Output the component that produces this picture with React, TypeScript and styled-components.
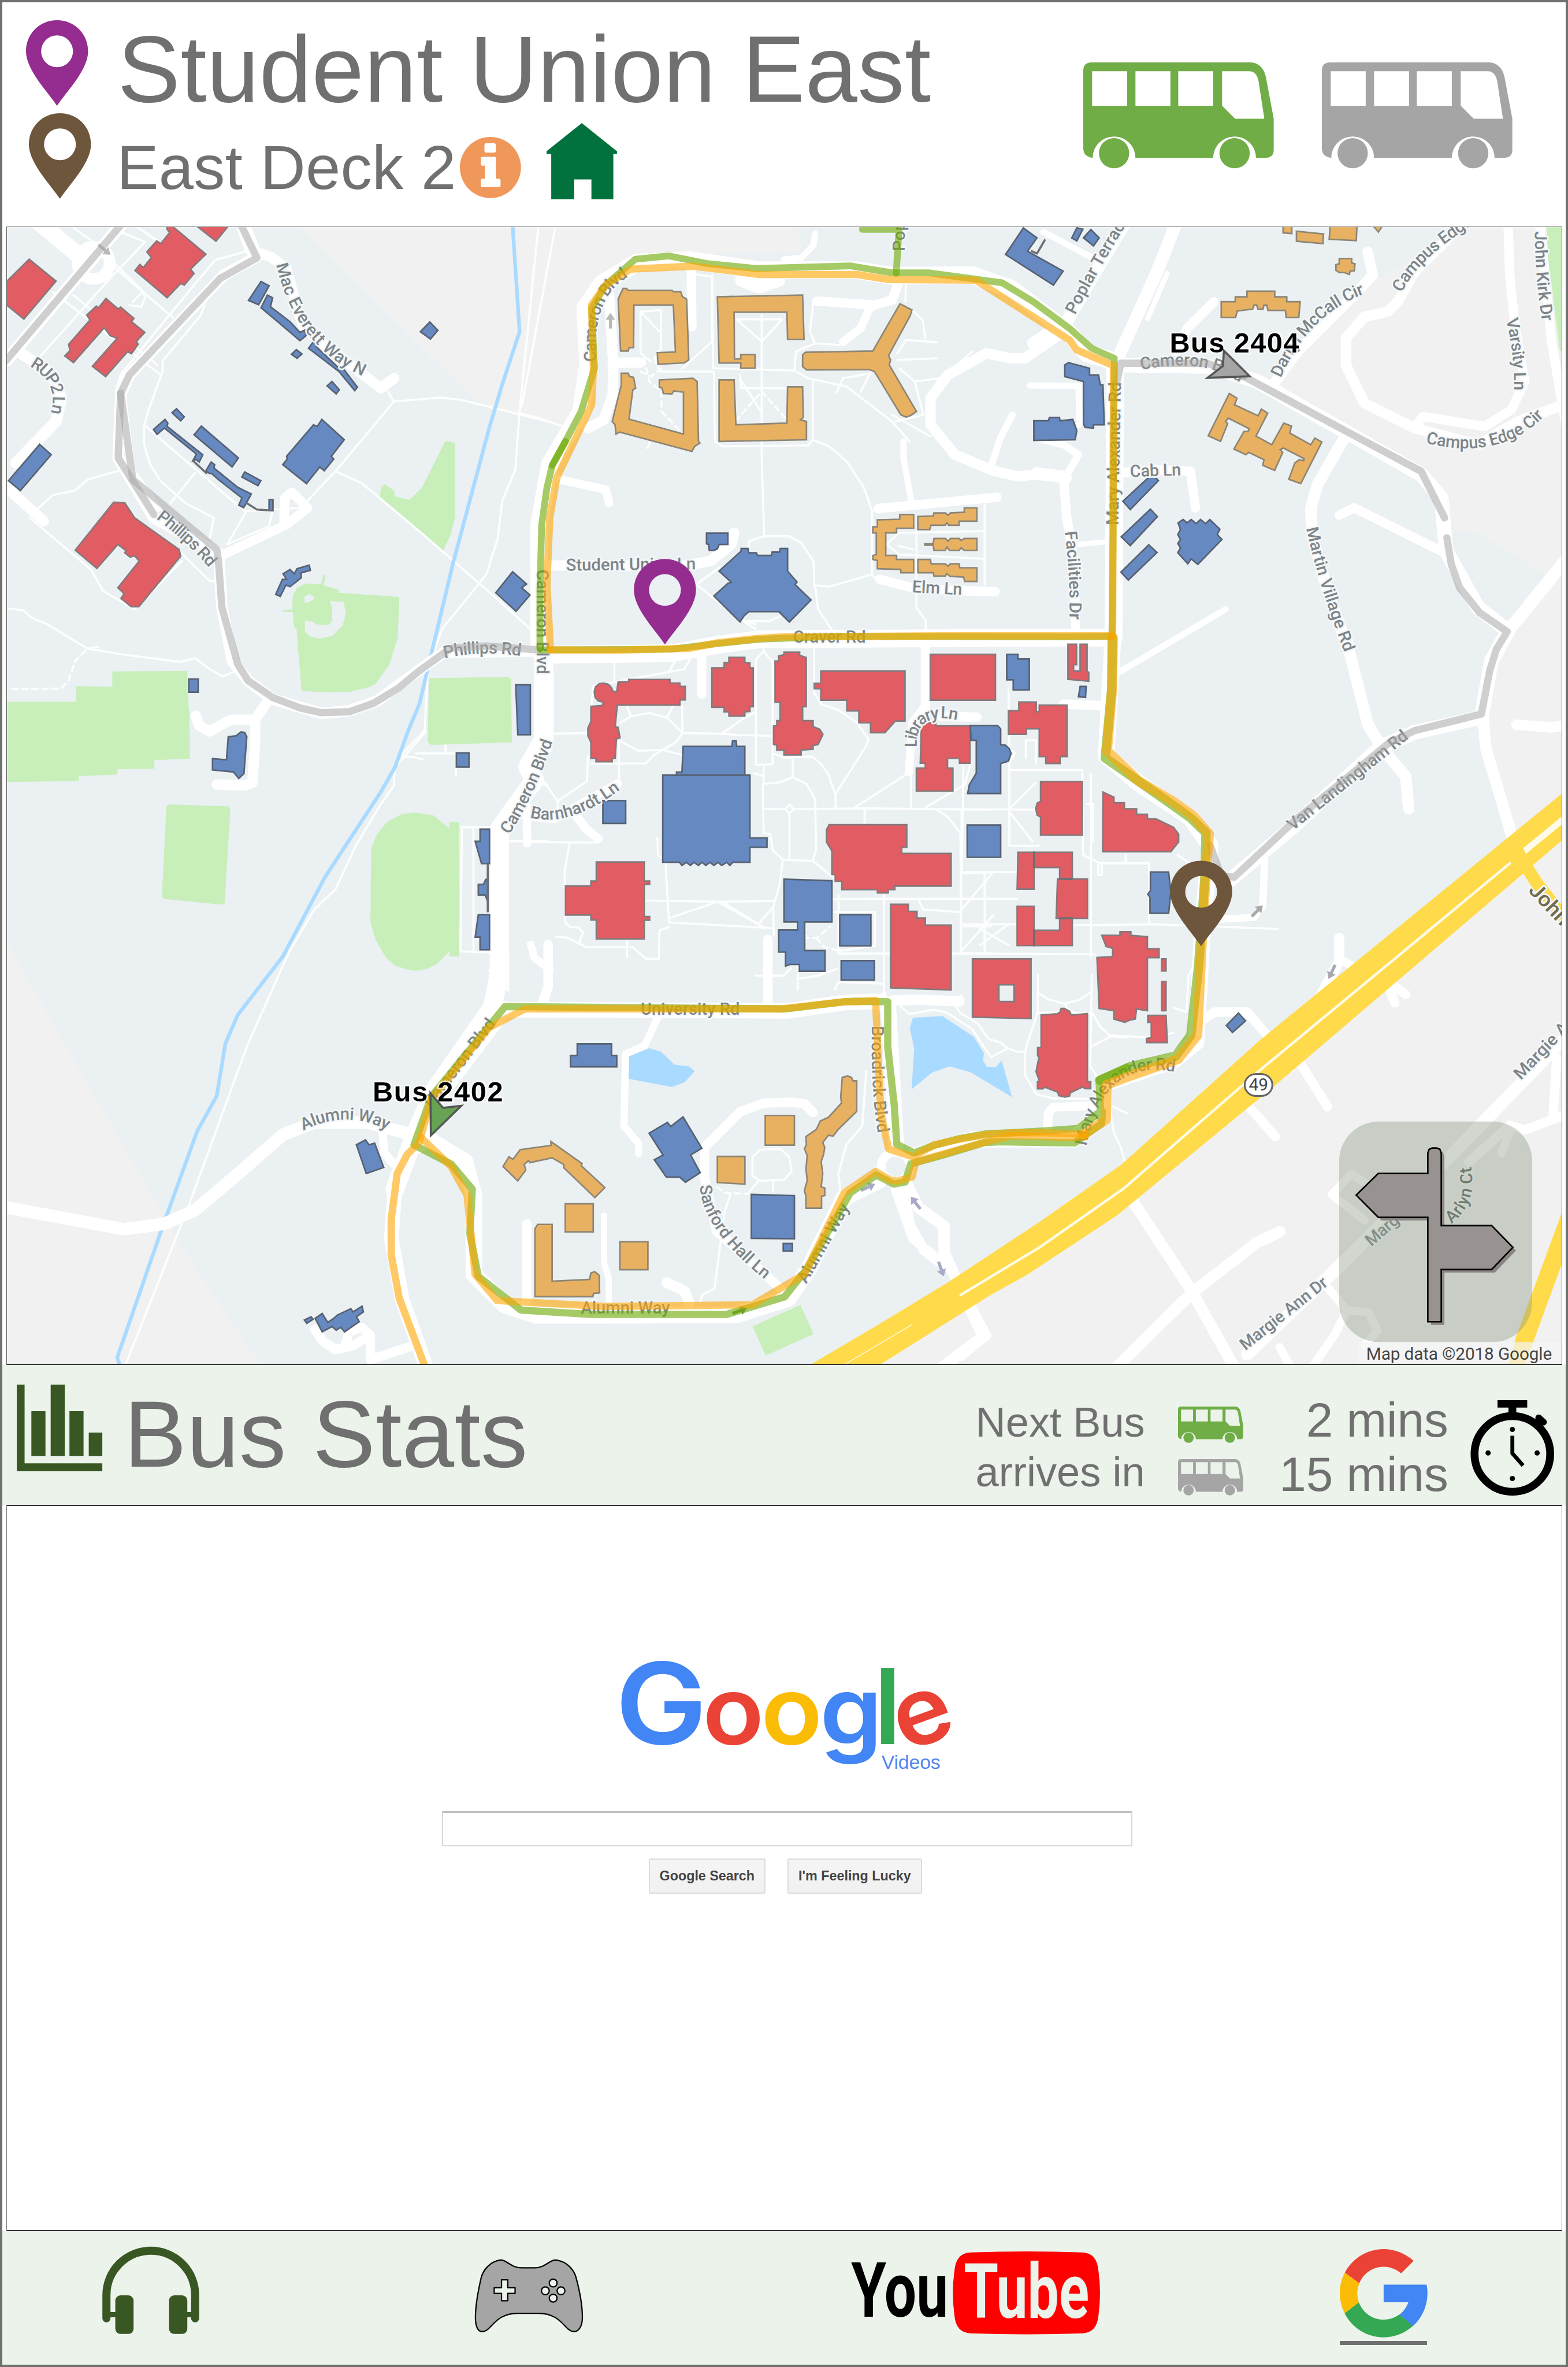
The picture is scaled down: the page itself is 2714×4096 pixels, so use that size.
import React from "react";
import styled, { createGlobalStyle } from "styled-components";

const K = 2714 / 3005;
const u = (n: number) => `${+(n * K).toFixed(2)}px`;

/* ---------- map survey: points are read inside named tiles ---------- */

const TILES: Record<string, [number, number, number, number]> = {
  A: [0, 430, 1050, 1000],
  B: [1000, 430, 1050, 1000],
  C: [2000, 430, 1005, 1000],
  D: [0, 1400, 1050, 1220],
  E: [1000, 1230, 900, 780],
  F: [1700, 1230, 1305, 1390],
  G: [700, 1900, 1200, 720],
  H: [1640, 1900, 522.7, 522.7],
};
const SIDE = 1568;

type Pt = [number, number];

const place = (tile: string, x: number, y: number): Pt => {
  const [ox, oy, w, h] = TILES[tile];
  return [+(ox + (x * w) / SIDE).toFixed(1), +(oy + (y * h) / SIDE).toFixed(1)];
};

const pts = (src: string): Pt[] => {
  let tile = "A";
  const out: Pt[] = [];
  src.trim().split(/\s+/).forEach((tok) => {
    if (/^[A-H]$/.test(tok)) tile = tok;
    else {
      const [x, y] = tok.split(",").map(Number);
      out.push(place(tile, x, y));
    }
  });
  return out;
};
const join = (src: string) => pts(src).map((p) => p.join(",")).join(" ");
const lines = (src: string) => src.trim().split("\n").map((l) => l.trim()).filter(Boolean);

const OUTSIDE = lines(`
A 850,0 1370,535 1568,595 B 130,610 200,420 200,250 300,110 400,90 800,80 790,0
D 20,525 510,1258 750,1568 20,1568
C 1568,0 1250,0 1060,130 960,180 850,290 720,430 690,480 1130,740 1210,870 1230,920 1300,925 1500,1050 1395,1225 1350,1300 1305,1480 F 1375,260 1440,430 1568,350
F 1568,380 530,1200 0,1520 G 1200,1568 F 1568,1568
`);

const PARKS = lines(`
A 1275,648 1302,655 1302,880 1290,930 1268,980 1087,818 1090,790 1100,778 1128,798 1130,815 1172,826 1207,790
A 848,1210 842,1210 838,1163 810,1162 810,1157 836,1156 838,1115 850,1090 875,1077 918,1080 926,1050 932,1054 926,1083 970,1096 968,1105 1143,1118 1138,1240 1115,1320 1075,1380 1050,1391 1000,1403 940,1405 863,1400
A 20,1433 218,1433 218,1386 321,1388 321,1342 536,1340 536,1400 542,1470 D 543,68 441,72 441,93 336,94 336,107 225,111 225,123 20,126
A 1228,1362 1455,1358 1463,1365 1465,1555 1235,1563 1224,1555
D 482,181 655,186 659,192 643,424 635,428 468,414 463,408 476,186
D 1062,290 1078,255 1110,222 1150,205 1185,201 1240,208 1286,240 1286,224 1314,224 1314,556 1286,556 1286,543 1250,575 1220,587 1190,591 1165,588 1130,578 1105,560 1075,515 1060,470
G 970,1398 1090,1308 1123,1430 1003,1520
C 1505,0 1568,0 1568,378 1545,378 1530,260 1510,100
`);

const INFIELD = lines(`
A 872,1190 895,1192 903,1200 940,1203 950,1190 950,1150 944,1130 983,1133 990,1165 980,1205 950,1235 915,1243 890,1238 873,1224
A 872,1135 871,1118 885,1109 900,1118 899,1124 880,1135
`);

const LAKES = lines(`
H 330,150 500,140 680,260 738,355 733,395 755,432 805,434 840,396 900,607 660,463 540,430 440,465 322,562 337,330 312,210
G 660,270 712,236 740,250 775,305 810,312 825,332 800,378 768,398 657,363
`);

const RIVER =
  "A 1467,0 1487,320 1437,480 1400,610 1297,1015 1200,1440 D 1168,0 1130,90 1090,150 1010,255 930,360 810,555 680,700 645,770 620,900 565,985 470,1210 335,1545 345,1568";

const ROADS = lines(`
24|A 345,0 20,405
32|A 110,-10 235,100
22|A 700,0 735,95 640,150 370,450 345,510 338,700 440,880 625,985 635,1150 665,1310 710,1370 780,1425 920,1468 1000,1460 1080,1430 1190,1345 1270,1285 1540,1280
16|A 355,450 350,520 375,740 450,850
20|A 690,0 715,75 775,95 820,130 850,250 870,310 1090,490 1128,460
22|A 60,385 150,450 175,520 160,590 45,715
20|A 20,790 125,890
18|A 640,990 820,900 880,850 835,803 815,820 812,900
20|A 560,1475 570,1505 600,1522 660,1487 730,1487 770,1425
20|A 730,1487 D 730,30 722,128 700,134 620,132
34|B 330,112 230,175 182,250 190,420 170,560 80,720 50,900 50,1280
36|B 62,1290 62,1568
36|E 75,100 75,370 20,480 D 1530,120 1430,240 1428,600 1410,680 1240,890 1190,990 1130,1130
28|D 1190,1000 1130,1130 1120,1250 1150,1400 1220,1568
20|B 250,210 262,420 260,510 235,585 190,610
20|B 260,413 340,413
18|B 485,130 487,305
16|B 110,765 240,795 250,835
20|B 60,1023 470,1023 540,1010 600,960 608,925
34|B 330,112 480,105 680,135 960,135 1060,152 1290,150 1400,190 1568,325 C 130,385 215,410 210,1235
12|B 840,25 835,60 800,98 750,103
26|B 630,165 680,185 735,165
18|B 845,228 1010,240 1060,225 1080,170
16|B 1000,240 970,310 920,350
20|B 1545,325 1440,400 1400,400 1330,385 1220,450 1170,520 1170,600 1240,690 1350,738 1420,755 1470,750 1560,760
13|B 1345,720 1370,640 1405,570
12|B 1093,650 1093,700 1115,830
18|B 1020,852 1360,818
18|B 1025,1065 1110,1088 1230,1098 1355,1102
12|B 1455,482 C 105,483 108,600
14|C -20,640 60,660 105,690 65,760
22|C -20,745 60,755
18|C 60,755 70,880 90,1000 97,1220
10|C 100,960 190,952
24|C 218,410 340,140 395,0
10|C 312,280 370,145
18|C 400,380 430,310 510,230
24|C -30,355 70,290 150,150 240,0
12|C 0,20 170,110
28|C 225,420 500,425 640,470 1130,750 1190,820 1205,980 1300,1150 1390,1220 1340,1310 1310,1480 1110,1525 1010,1568 F 940,395 790,515
20|C 680,490 760,380 900,240 985,150 970,80
20|C 1250,0 1110,140 1060,230 1030,260 960,275 905,340 905,420 960,535 1110,610 1300,660 1420,590 1568,535
18|C 1110,610 1135,575 1320,605 1400,555 1440,470 1410,300 1395,150 1390,0
18|C 1485,0 1520,350 1568,630
22|C 900,640 820,780 800,850 803,930 850,1100 920,1300 970,1500 1010,1568 F 1150,240 1195,290 1202,360
20|F 1060,-10 1080,80 1110,180 1150,240
18|C 885,872 930,850 1200,985
18|C 225,745 330,735 440,740 455,850
12|C 545,1155 225,1345
24|C 1568,1000 1390,1220
22|C 1315,1480 F 1380,230 1440,420
20|C 1415,1502 1520,1510 1568,1503
18|C 60,1440 190,1445
17|B 1155,1255 1155,1450
18|B 515,1290 515,1410
34|B 62,1292 430,1287 560,1262 680,1245 1568,1240 C 210,1240
16|E 1350,0 1350,240 1305,310 1293,500
18|E 1400,285 1520,288
16|E 15,560 18,775
17|E 25,670 110,680 320,545
17|E 180,665 215,720 255,757
15|E 30,1165 42,1215 95,1262
18|E 88,1165 88,1330 65,1400
18|E 822,1145 822,1400
20|E 1240,1380 1330,1378 1462,1384
30|G 345,75 1060,80 1200,45 1290,40 1310,60 1330,640
34|G 345,75 220,350 160,480 130,640
32|G 140,600 250,710 272,850 272,1180 350,1310 430,1352 600,1352 930,1350 1060,1280 1110,1160 1200,860 1285,790
28|G 325,0 320,90
16|G 455,0 445,60
14|G 735,100 700,225 652,260 648,560 685,635 685,675
18|G 1122,505 1100,468 1070,462 1000,465 940,500 850,650 850,780 880,1000 1040,1240
18|G 405,970 405,1290
12|G 598,935 598,1130 610,1200 610,1290
20|G 755,1215 800,1250 812,1300
20|G 1345,800 1365,980 1400,1080 1440,1130
22|G 1350,780 1385,900 1450,980 1450,1090 1480,1200 1548,1440 1420,1600
18|F 20,1185 60,1290 150,1360 230,1500 170,1545
32|F 60,1112 200,1075 430,1075 500,1025 500,955 660,905 712,865 728,600 745,440 700,380 580,305 505,245 520,0
24|D 20,1175 355,1228 470,1215 560,1180 690,1085 810,995 900,965 1050,965 1180,995
16|D 1095,990 1100,1040 1140,1080
18|D 900,1475 925,1505 960,1525 1010,1515 1060,1490 1035,1470 1000,1480 985,1520
18|D 1060,1490 1060,1550 1200,1510
22|F 560,1200 700,1400 800,1568
22|F 530,1568 700,1410 850,1300 905,1275
24|F 1568,850 1300,1110 1020,1370 830,1540
18|F 945,900 1015,1005
18|F 730,815 755,800 830,800 880,855 930,920
18|F 830,1000 895,1070
20|F 1042,640 1042,690 990,780
16|F 1042,685 1090,710 1130,740
18|F 1150,730 1170,780
18|F 1150,730 1195,762
14|F 745,600 845,595 866,570 870,470
18|F 1568,1020 1470,1055 1435,1045 1340,1125
18|F 1543,900 1535,1020
16|F 1435,1060 1415,1105
16|F 1100,1250 1025,1195 1070,1150 1150,1200
16|F 905,1525 930,1568
16|F 980,1568 1030,1500 1060,1445 1110,1450 1130,1490 1100,1520
16|F 1000,1380 1060,1445
17|H 1105,780 1108,700 1135,665 1380,655
`).map((l) => l.split("|"));

const PATHS = lines(`
A 200,0 260,45 415,205
A 330,130 495,278
A 300,0 415,50 310,165 110,400
A 150,200 460,450
A 385,0 470,60
A 210,210 450,420
A 380,230 408,200 415,215 405,245 370,240
A 700,80 615,105 555,180 430,340 345,450 330,500
A 585,240 575,270 465,408 465,440 430,540 412,600 412,660 430,720 460,770 530,835 612,880 600,940
A 412,600 500,680 700,860 855,850
A 558,745 488,835
A 705,860 650,960 770,905 778,865
A 1110,500 1127,530 960,740 860,850
A 1127,530 1260,518 1320,525 1568,590
A 960,740 1035,775 1200,920 1375,1080 1530,1225
A 1540,10 1487,560 1475,735 1437,830 1425,940 1392,1050 1265,1215 1225,1330 1215,1520 1150,1590
D 1220,0 1130,90 1127,135 1090,180 1020,280 960,390 900,440 830,540 710,770 540,1170 360,1560
B 95,10 0,545
B 0,567 50,580 130,610
A 20,1152 65,1158 95,1183 135,1200 250,1273 345,1290 515,1313 558,1302 600,1335 637,1357 675,1340
A 250,1273 280,1268
A 85,880 260,1035 295,1100 385,1155 520,1010
A 100,860 150,812 215,797 250,765 340,738
A 518,985 600,1070 610,1070
B 545,150 548,430 780,437 820,460 930,485 1060,590 1110,650
B 480,145 545,155 545,350 460,430
B 340,260 398,255 398,370 380,400 395,440 548,440
B 340,260 395,320
B 340,260 340,385 370,410
B 360,670 375,630
B 687,270 687,700 694,935 650,950 650,985
B 615,283 745,283 687,350 615,283
B 625,450 628,490 755,490
B 627,465 685,560
B 550,440 553,650 575,665 820,662 833,645 833,470
B 833,645 880,665 930,710 980,790 1003,860 1003,1050 880,1087 840,1083 848,1155 890,1220
B 694,935 765,935 800,955 835,1010 838,1085
B 780,437 785,380 840,355 910,360
B 840,355 825,320 835,230
B 1117,255 1148,285 1155,340
B 1075,385 1100,345 1190,352
B 1075,405 1190,400
B 1080,430 1125,470 1200,460 1290,380
B 1125,470 1150,570 1070,590
B 900,505 920,460 1000,445
B 970,500 1000,440
B 1100,170 1098,230
B 1060,570 1170,635
B 1003,1050 1010,1060
B 1325,840 1325,1080
B 1045,960 1080,925 1325,920
B 1045,960 1080,990 1325,1003
B 1080,965 1120,975
B 1130,920 1130,1150 1157,1190 1155,1235
B 500,1080 625,1185 670,1200
B 500,1080 565,1030
B 635,1190 670,1215
B 650,1190 710,1190 740,1175
B 265,1290 265,1375
B 490,1290 465,1335 205,1385 200,1440
B 450,1290 420,1345
E 105,352 221,350
E 328,310 365,285 425,272 485,290 537,350 515,385 470,415 390,418 328,380
E 365,285 350,245
E 485,290 505,245
E 537,350 668,352 735,358 841,360
E 668,352 745,290 775,272
E 537,350 535,245
E 231,467 415,467 440,435 470,415 538,435
E 325,380 325,530
E 221,440 218,535 120,612 120,650
E 60,540 85,555 120,612
E 782,65 782,472 838,470 838,75 808,35 782,65
E 808,0 808,35
E 808,472 808,545 860,540 905,520 950,545 980,605 983,800 972,843 872,838 838,800 830,740 808,735 805,545
E 905,440 905,520
E 841,430 880,445 970,440 1000,470 1025,510 1048,590 1048,640
E 1048,585 1150,400 1158,375 1120,310 1060,262 1000,238 977,195 977,0
E 808,642 880,643 894,625 908,643 894,660 880,643
E 908,643 1145,640 1568,645
E 894,660 894,838
E 1145,640 1145,700
E 1115,635 1290,505
E 1300,500 1300,635
E 1350,635 1480,548 1500,460
E 1385,645 1425,675 1465,735 1468,1200
E 1475,480 1470,890 1568,887
E 775,505 808,515
E 872,838 862,930 840,1020 842,1130
E 972,843 1045,910
E 415,995 655,1000 840,997
E 480,850 492,1080 840,1102
E 495,1062 655,1000 790,1087 840,1020
E 670,1000 810,1100
E 30,770 255,772
E 160,775 143,880 145,1080 160,1097 190,1100 205,1120 190,1160
E 115,1135 150,1138 215,1175 370,1175 415,1220 458,1220 460,1110 492,1098
E 352,1145 352,1215
E 453,755 455,822 470,830
E 1040,990 1568,988
E 1210,970 1210,1360
E 1058,975 1058,1200 1568,1200
E 1045,1340 1058,1310 1210,1316
E 1045,1040 1180,1040 1180,1170 1058,1190
E 780,1285 875,1285 900,1255
E 922,1245 922,1340
E 925,1297 990,1285 1055,1258
E 1325,990 1340,1030 1465,1040
E 1470,1095 1568,1095
F 280,100 282,230 295,240 282,260 282,440 350,440
F 172,360 170,670
F 0,360 350,362
F 282,360 342,305
F 285,370 335,430
F 282,276 450,276 452,460 490,478 604,478 604,610
F 470,285 470,680
F 0,555 300,555
F 320,250 320,212 343,212 343,262
F 172,497 300,497
F 170,610 300,610
F 225,500 225,670
F 245,497 170,580
F 170,670 245,590
F 215,620 280,655
F 215,655 280,610
F 170,673 480,675
F 430,612 620,610 900,620
F 460,350 475,350 475,430
F 487,480 487,503 495,503 495,480
F 550,460 550,480
H 1050,-100 1047,122 990,290 975,350 975,480 1040,590 1140,615 1370,616
H 1047,5 1110,45 1205,70 1290,45 1360,0
H 1205,70 1215,95 1260,122 1360,122 1410,205 1468,258 1560,263
H 1045,122 1180,120
H 1468,258 1355,315
H 1358,-100 1350,430 1390,490
H 610,20 580,90 600,120 705,185 765,272 832,292 875,325 925,345 975,345
H 260,85 310,128 450,104 525,120 670,215 780,378 875,325
H 140,40 165,0 180,40
H 1470,655 1560,700
H 1465,680 1485,810 1525,895 1555,1000
F 660,790 690,800 695,720 712,690
F 510,850 600,855 660,845
F 670,460 730,500
G 1255,330 1245,560 1205,640 1185,760 1190,830
G 970,690 990,660 1040,657 1062,690 1068,750 1050,785 990,790 970,770 970,690
G 985,790 960,840
G 1022,790 1022,830
G 915,845 900,920 875,1240 845,1265 838,1300
D 1210,70 1188,65 1150,62
D 1190,55 1305,55 1305,110
D 1275,35 1275,55
D 1425,237 1322,237 1318,543 1400,546
D 1355,240 1355,545
D 1400,590 1455,640 1452,270
D 1455,272 1568,272
D 1545,115 1568,135
`);

const DASHES = lines(`
A 35,1395 175,1393 195,1370 215,1310 250,1273
B 350,400 365,470 400,500 400,560 460,625
B 755,580 687,500 615,585
B 340,440 370,455 400,430
E 945,1090 950,1140 985,1140 1030,1095
E 985,1140 1010,1175 1058,1188
G 880,815 900,840 960,845
`);

const RED = lines(`
A 13,175 83,102 160,168 68,282 13,235
A 478,0 490,0 589,87 545,132 555,145 527,180 517,175 478,218 386,136 400,118 410,127 433,97 420,80 448,47 460,55 485,22 478,12
A 560,0 655,0 618,48
A 303,220 338,252 345,246 383,280 376,290 414,322 390,350 395,358 376,386 365,380 302,455 264,424 335,340 315,332 298,308 210,413 185,393 200,377 196,358 257,285 248,270 275,243 282,248
A 325,833 357,835 385,880 512,975 517,995 397,1147 375,1147 346,1122 355,1108 337,1090 398,1010 385,994 372,998 357,985 360,978 337,960 277,1032 215,977
E 242,190 247,170 258,160 270,157 288,161 298,172 306,190 317,190 322,152 357,152 357,143 495,143 495,157 528,157 528,170 546,170 546,222 528,222 528,242 319,242 312,325 322,328 328,368 316,372 312,447 302,447 302,460 248,460 248,447 231,447 231,385 221,360 221,330 231,305 231,247 270,243 272,230 256,226 245,212
E 635,98 676,98 676,78 692,78 692,58 745,58 745,78 762,80 762,98 773,98 773,248 762,248 762,266 745,268 745,284 692,284 692,268 676,268 676,250 635,250
E 846,72 858,72 858,52 876,48 876,38 928,38 928,50 950,58 950,248 938,248 938,302 973,302 973,325 995,335 1006,355 990,394 973,398 973,412 933,415 933,434 876,434 876,415 852,415 852,396 841,393 841,322 852,322 852,302 863,302 863,231 846,231
E 999,111 1280,111 1280,303 1248,303 1213,348 1165,348 1165,310 1126,310 1126,264 1086,264 1086,223 999,223 999,179 977,179 977,158 999,158
F 100,26 250,26 250,125 100,125
E 1335,310 1383,310 1383,322 1497,322 1497,466 1462,466 1462,447 1422,447 1422,485 1440,485 1440,573 1318,573 1318,485 1348,485 1348,466 1331,466
E 1027,703 1286,703 1286,790 1269,790 1269,814 1434,814 1434,940 1246,940 1246,953 1224,953 1224,966 1188,966 1188,953 1069,953 1069,921 1047,921 1047,895 1036,895 1036,805 1018,770 1018,722
E 1232,1010 1291,1010 1291,1037 1320,1037 1320,1063 1348,1063 1348,1090 1434,1090 1434,1340 1232,1332
E 249,847 409,847 409,920 427,920 427,934 409,934 409,1057 427,1057 427,1071 409,1071 409,1143 249,1143 249,1070 231,1070 231,1051 146,1051 146,940 231,940 231,920 249,920
F 417,4 437,4 437,48 430,48 430,62 445,62 445,4 461,4 461,62 465,65 465,84 417,80
F 280,148 304,148 304,129 344,129 344,150 351,150 351,136 415,136 415,247 399,247 399,262 366,262 366,247 351,247 351,187 321,187 321,199 280,199
F 354,301 450,301 450,417 354,417 354,378 346,374 343,360 346,348 354,344
F 498,324 523,335 523,347 547,347 547,360 575,360 575,372 600,372 600,382 620,382 660,400 672,415 672,432 654,453 497,453
F 302,454 427,454 427,512 462,512 462,597 427,597 427,656 300,656 300,571 339,571 339,623 398,623 398,597 390,597 393,512 398,512 398,487 339,487 339,534 300,534
F 197,685 332,685 332,814 197,811
F 495,634 537,634 537,626 562,626 562,634 600,637 600,663 627,663 627,682 600,682 600,797 575,793 572,815 560,817 548,822 523,815 523,797 489,792 484,682 520,680 520,662 505,658
F 633,685 643,685 643,711 633,711
F 633,734 643,734 643,797 633,797
F 601,807 643,807 646,866 598,866 598,857 609,855 609,822 601,822
H 1067,134 1160,127 1175,118 1182,97 1200,97 1230,112 1240,135 1333,126 1333,518 1352,518 1352,558 1320,558 1305,548 1235,582 1230,600 1205,606 1168,598 1163,578 1090,550 1075,559 1046,559 1046,518 1057,515 1038,460 1055,372 1047,370 1047,322 1067,322
`);

const BLUE = lines(`
A 747,169 770,182 740,239 711,226
A 765,210 780,218 774,245 830,290 858,322 872,315 876,332 858,347 800,295 747,248
A 900,345 915,350 905,365 965,425 985,435 1023,487 1015,497 970,440 883,370
A 848,374 864,387 850,400 834,388
A 950,470 971,495 962,507 936,483
A 1230,291 1253,316 1232,342 1203,320
A 505,552 527,576 517,588 492,564
A 472,584 480,595 478,605 580,690 570,712 560,704 552,708 562,688 470,610 449,629 439,614
A 576,604 682,700 664,727 555,630
A 604,712 614,720 612,730 680,788 719,808 705,835 697,849 683,842 692,820 625,765 606,747 600,746 588,740
A 700,742 746,768 738,783 692,757
A 770,825 781,825 781,858 770,858
A 921,584 985,645 948,695 955,703 928,738 915,727 877,777 809,720 822,703 820,695 897,600 908,605
A 113,659 146,690 58,798 24,768
A 885,1022 888,1038 862,1045 862,1060 830,1087 818,1082 802,1116 789,1110 808,1065 820,1065 810,1048 830,1035 842,1048 850,1033
A 540,1365 567,1365 567,1404 540,1404
A 1467,1042 1507,1079 1493,1090 1517,1112 1477,1161 1419,1105
A 1476,1382 1518,1382 1518,1532 1482,1532
D 653,14 675,12 690,2 700,4 706,14 698,105 683,117 668,101 608,96 608,68 648,71
D 1306,54 1342,54 1342,89 1306,89
D 1374,242 1401,242 1401,327 1378,327 1360,272 1374,272
D 1369,378 1384,378 1390,366 1396,366 1396,420 1388,404 1369,404
D 1369,453 1401,453 1401,539 1374,539 1374,508 1360,508
D 1020,1020 1046,1008 1056,1020 1072,1016 1098,1076 1048,1091
D 902,1448 922,1436 938,1458 955,1448 965,1440 1004,1424 1010,1432 1036,1418 1040,1432 1020,1444 1028,1456 986,1481 975,1470 962,1477 950,1468 922,1481
D 871,1452 890,1444 896,1450 878,1460
B 1436,8 1475,38 1448,78 1550,138 1522,180 1385,88
B 529,926 590,926 590,960 565,960 560,973 550,978 537,978 535,960 529,958
B 628,980 628,972 648,972 650,985 672,985 675,993 715,993 717,983 738,983 740,972 761,972 761,1040 788,1073 782,1080 828,1127 766,1193 736,1162 650,1162 636,1175 625,1193 550,1115 590,1077 600,1074 565,1040
C 75,413 138,430 138,450 165,450 170,480 178,480 182,600 150,600 150,610 125,608 120,598 120,470 64,455 64,420
B 1466,588 1508,588 C 18,578 48,578 50,588 88,584 100,618 95,645 B 1466,647
C 326,748 344,768 260,855 238,830
C 320,854 341,876 260,963 233,937
C 315,961 340,984 254,1067 232,1043
C 403,895 418,885 430,895 442,885 457,897 470,885 485,897 498,885 528,914 520,930 534,945 462,1020 442,1003 432,1018 402,985 410,970 402,957 410,945 402,930 410,915
C 110,1387 128,1387 126,1420 105,1418
C 100,8 118,12 100,47 85,38
C 142,13 167,38 150,62 120,38
F 276,26 302,26 302,36 328,36 328,103 291,103 291,81 276,81
F 192,180 255,180 262,187 262,222 272,222 282,230 286,240 280,257 262,262 262,327 186,327 190,308 206,283 206,212 194,212
F 185,395 262,395 262,465 185,465
F 607,497 649,497 654,540 649,586 606,586 606,552 601,545 607,537
F 810,802 826,819 796,844 782,829
E 539,401 702,401 704,380 716,380 718,401 745,401 745,514 517,514 517,500 535,500
E 471,512 762,512 762,754 819,754 819,790 762,790 762,848 705,848 695,860 685,848 668,860 655,848 642,860 628,848 615,860 602,848 590,860 575,848 563,860 550,848 535,860 527,848 471,848
E 271,610 347,610 347,698 271,698
E 876,913 1036,919 1036,1078 945,1078 945,1188 1013,1188 1013,1268 927,1268 927,1242 895,1242 881,1248 881,1194 858,1194 858,1109 921,1109 921,1078 876,1078
E 1062,1050 1166,1050 1166,1170 1062,1170
E 1067,1227 1178,1227 1178,1302 1067,1302
G 531,218 617,218 617,267 630,267 630,314 514,314 514,267 531,267
G 796,523 843,654 815,682 839,756 802,796 788,775 754,774 724,702 746,682 711,591 757,546 765,563
G 967,847 1075,852 1075,1032 967,1030
G 1047,1052 1070,1052 1070,1083 1047,1083
`);

const AMBER = lines(`
B 290,190 300,190 305,196 430,196 435,200 455,200 460,215 472,222 478,405 465,414 390,418 388,383 440,381 434,240 321,240 320,368 307,368 305,378 283,378 276,222
B 285,445 305,445 308,455 320,457 326,490 318,495 307,583 463,628 463,502 435,498 430,507 405,506 402,490 394,487 394,465 490,460 502,470 506,650 510,655 495,665 487,680 280,622 270,628 267,600 259,590 285,480
B 560,215 804,210 808,343 761,343 759,261 608,261 609,402 627,402 627,389 668,389 668,430 627,430 627,414 565,414
B 565,465 608,465 613,600 759,595 761,486 804,486 806,578 798,585 815,590 815,645 565,650
B 1083,236 1117,255 1112,272 1050,392 1056,405 1052,420 1130,560 1113,572 1100,577 1085,570 1010,440 995,434 815,435 804,425 804,390 812,382 1005,378
B 1005,907 1018,907 1018,886 1082,884 1082,870 1122,870 1122,911 1073,911 1073,925 1042,925 1042,993 1073,993 1073,1005 1122,1005 1122,1045 1085,1045 1085,1035 1018,1033 1018,1008 1005,1005 1005,993 1015,990 1015,925 1005,925
B 1134,876 1178,874 1180,865 1213,865 1220,872 1227,865 1267,863 1267,850 1303,850 1303,890 1252,890 1252,902 1222,902 1217,895 1212,902 1172,902 1168,915 1134,915
B 1154,958 1178,958 1180,942 1213,942 1220,950 1227,942 1252,942 1258,948 1267,942 1303,942 1303,978 1267,978 1258,970 1252,978 1225,978 1217,968 1212,978 1180,978 1178,962 1154,962
B 1134,1005 1170,1005 1172,1018 1212,1018 1220,1025 1227,1018 1252,1018 1254,1030 1303,1030 1303,1071 1268,1071 1265,1058 1227,1056 1217,1048 1212,1055 1180,1055 1178,1045 1134,1045
C 609,198 692,198 692,215 728,215 728,230 768,230 764,277 726,277 724,256 672,256 668,240 660,240 657,252 642,252 638,240 630,240 626,252 580,258 575,277 532,277 532,230 574,230 574,215 609,215
C 556,506 579,520 572,540 642,573 652,553 671,565 636,634 683,660 719,595 742,604 737,625 800,660 812,640 833,652 770,777 734,764 752,715 765,705 778,708 780,702 718,670 708,675 716,683 692,737 656,722 660,705 614,683 606,690 570,673 600,620 612,620 616,612 553,580 545,590 551,597 530,650 493,633
C 717,0 743,0 743,25 717,23
C 757,18 838,26 836,55 757,48
C 858,0 938,0 936,46 855,42
C 985,0 1015,0 1002,20
C 885,100 922,100 922,113 932,116 930,137 918,137 915,148 900,142 885,142 875,135 875,118 885,116
G 1195,358 1208,352 1218,358 1222,373 1231,372 1231,500 1185,575 1172,603 1160,600 1146,630 1151,650 1148,680 1142,710 1146,760 1142,815 1151,820 1151,852 1143,855 1143,904 1104,904 1104,855 1100,830 1107,790 1104,740 1107,685 1100,655 1105,640 1104,605 1130,575 1140,540 1160,525 1193,465 1191,440
G 1002,517 1075,517 1075,641 1002,641
G 882,688 951,688 951,804 882,797
G 465,626 543,718 541,727 600,818 575,860 497,735 497,722 468,694 412,714 409,706 398,722 402,745 382,790 345,730 360,690 370,700 388,660 465,642
G 501,886 571,886 571,1003 501,1003
G 425,990 432,972 468,972 468,1209 562,1202 565,1175 575,1170 586,1185 587,1258 572,1260 570,1274 425,1274
G 638,1045 708,1045 708,1161 638,1161
`);

const WALLS = lines(`
A 552,708 590,745
A 705,835 735,855 781,858
A 870,320 910,350
B 1497,45 1475,85 1460,78
D 1396,330 1396,445
F 339,454 339,487
F 398,597 427,597
F 339,623 339,656
F 398,512 427,512
`);

const HIGHWAY = lines(`
F 1568,317 860,860 540,1130 350,1255 140,1385 0,1465 G 1105,1568 1280,1568 1568,1265 F 320,1370 530,1240 890,962 1568,418
F 1568,1200 1450,1500 1430,1568 1468,1568 1568,1310
`);
const MEDIANS = lines(`
12|F 1568,375 1455,462
5|F 1435,478 1150,700 860,925 545,1182 350,1310 170,1412
1.5|G 1370,1390 1190,1568
`).map((l) => l.split("|"));

const GREY_ROUTE = lines(`
A 345,0 10,415
A 690,0 735,98 630,160 370,450 345,505 338,700 440,870
A 345,505 380,765 620,975 625,1010 635,1150 680,1320 710,1370 780,1420 860,1452 920,1466 1000,1463 1070,1437 1140,1392 1200,1340 1290,1272 1390,1265 1540,1277
C 220,470 232,415 490,415 600,455
C 600,455 1130,740 1200,880
C 1207,940 1220,1020 1245,1090 1305,1165 1387,1222 1355,1275 1335,1340 1310,1470 1110,1520 1030,1560 F 940,385 800,508 770,505 745,440
`);
const GREEN_ROUTE = lines(`
13|B 975,12 1080,12 1072,145
13|B 87,722 125,650
13|B 52,1275 52,1100 57,900 72,790 87,722 125,650 170,560 208,430 200,250 240,180 325,102 420,92 530,115 670,130 940,122 1060,143 1165,143 1375,173 1465,230 1568,310 C 145,370 212,400 212,420 208,1000 205,1235
13|C 205,1236 B 1568,1238 900,1236 680,1245 560,1258 430,1275 55,1277
18|C 206,1240 F 518,100 503,250 640,340 700,380 735,412 733,500 726,600 718,700 700,850 665,895 560,918 H 1405,510
14|H 1560,435 1400,508 1408,690 1280,787 1100,800 900,812 750,818 600,845 450,885 335,928 237,878 222,650 185,320 185,58 0,55 G 1200,42 1050,72 350,62 165,440 122,640 215,720 268,825 262,1010 283,1190 390,1330 565,1348 905,1348 1050,1275 1105,1160 1215,840 H 120,1055 220,1107 285,1095 318,990 500,940 740,868 830,863 1100,868 1260,870 1415,760 1420,690
`).map((l) => l.split("|"));
const AMBER_ROUTE = lines(`
14|B 82,1275 72,1080 80,880 100,760 200,540 205,430 200,240 240,180 310,132 490,123 680,148 960,148 1050,163 1300,165 1568,345 C 100,375 210,422 208,1000 207,1235
14|C 207,1235 B 1200,1235 750,1238 680,1242 560,1256 480,1272 270,1278 82,1277
19|C 208,1240 F 519,100 507,235 580,300 660,345 705,375 742,415 735,500 728,600 715,850 670,902 560,938 H 1445,535 1440,735 1310,822
14|H 1320,820 1100,812 900,812 750,822 600,848 450,882 330,950 190,905 145,700 115,50 0,58 G 1200,42 1040,72 400,72 310,150 165,450
14|H 1320,835 1240,838 900,828 800,850 500,935 345,980 325,1065 240,1090 200,1085 115,1035 G 1200,840 1100,1180 970,1308 600,1315 330,1290 275,1180 255,850 215,730 140,610
14|G 165,450 135,630 105,680 80,760 65,950 65,1100 85,1280 150,1568
`).map((l) => l.split("|"));

type Label = { t: string; p: string; size?: number; ink?: string };
const LABELS: Label[] = [
  { t: "Mac Everett Way N", p: "A 790,118 880,325 1040,455" },
  { t: "RUP2 Ln", p: "A 84,424 143,485 144,568" },
  { t: "Phillips Rd", p: "A 446,882 530,955 600,1032" },
  { t: "Phillips Rd", p: "A 1272,1302 1380,1288 1493,1296" },
  { t: "Cameron Blvd", p: "B 43,1035 43,1350" },
  { t: "Cameron Blvd", p: "B 214,410 230,248 308,153" },
  { t: "Poplar", p: "B 1096,78 1098,-70" },
  { t: "Student Union Ln", p: "B 127,1039 498,1035" },
  { t: "Elm Ln", p: "B 1117,1104 1260,1112" },
  { t: "Craver Rd", p: "B 777,1255 985,1255" },
  { t: "Library Ln", p: "E 1320,405 1350,308 1458,301" },
  { t: "Poplar Terrace", p: "C 95,270 170,130 262,-25" },
  { t: "Campus Edge", p: "C 1072,203 1150,100 1290,-5" },
  { t: "Darryl McCall Cir", p: "C 710,460 815,300 964,205" },
  { t: "John Kirk Dr", p: "C 1470,18 1476,155 1492,292" },
  { t: "Varsity Ln", p: "C 1384,283 1403,390 1408,500" },
  { t: "Campus Edge Cir", p: "C 1143,655 1345,662 1500,572" },
  { t: "Cameron Blvd", p: "C 292,435 460,425 590,475" },
  { t: "Cab Ln", p: "C 260,757 412,752" },
  { t: "Mary Alexander Rd", p: "C 224,902 232,472" },
  { t: "Facilities Dr", p: "C 64,922 76,1055 78,1188" },
  { t: "Martin Village Rd", p: "C 786,912 835,1095 902,1288" },
  { t: "Van Landingham Rd", p: "F 935,408 1203,207" },
  { t: "Margie Ann", p: "F 1460,948 1605,805" },
  { t: "Margie Ann Dr", p: "F 826,1533 1018,1390" },
  { t: "Margie", p: "F 1116,1308 1205,1235" },
  { t: "Arlyn Ct", p: "F 1300,1258 1342,1205 1345,1132", ink: "#5f6660" },
  { t: "Mary Alexander Rd", p: "F 460,1090 530,953 665,930" },
  { t: "Barnhardt Ln", p: "E 27,675 170,668 332,565" },
  { t: "Cameron Blvd", p: "D 1457,256 1525,150 E 104,378" },
  { t: "Cameron Blvd", p: "D 1235,930 1420,722" },
  { t: "Alumni Way", p: "D 868,985 990,958 1110,985" },
  { t: "University Rd", p: "G 690,97 938,97" },
  { t: "Broadrick Blvd", p: "H 93,195 100,560 130,820" },
  { t: "Alumni Way", p: "G 540,1345 763,1345" },
  { t: "Sanford Hall Ln", p: "G 838,810 882,1000 1003,1205" },
  { t: "Alumni Way", p: "G 1105,1222 1214,900" },
  { t: "Johnson", p: "F 1476,538 1610,672", size: 40, ink: "#6f6c4c" },
];

const ARROWS: [number, number, number, string][] = [
  [200, 477, 130, "#b9b9b9"],
  [1170, 613, 0, "#b9b9b9"],
  [2410, 1745, 45, "#a9a9a9"],
  [2553, 1862, -155, "#a9a9b0"],
  [1755, 2305, -38, "#a9a9c8"],
  [1804, 2432, 160, "#a9a9c8"],
  [1664, 2275, 65, "#a9a9c8"],
  [1418, 2512, 70, "#7c9a5a"],
];

/* ---------- styles ---------- */

const Global = createGlobalStyle`
  body { margin: 0; background: #fff; }
  * { box-sizing: border-box; }
`;
const Frame = styled.div`
  width: 2714px;
  height: 4096px;
  overflow: hidden;
  border: ${u(5)} solid #6e716e;
  background: #fff;
  display: grid;
  grid-template-rows: ${u(430)} ${u(2181)} ${u(268)} ${u(1392)} 1fr;
  font-family: "Liberation Sans", Arial, sans-serif;
  color: #707070;
`;
const Header = styled.header`
  display: flex;
  justify-content: space-between;
  padding: ${u(34)} ${u(102)} 0 ${u(45)};
`;
const Stops = styled.div`
  display: flex;
  flex-direction: column;
  gap: ${u(15)};
`;
const StopRow = styled.div<{ $indent?: number }>`
  display: flex;
  align-items: flex-start;
  height: ${u(164)};
  padding-left: ${(p) => u(p.$indent ?? 0)};
`;
const Heading = styled.h1<{ $size: number; $top: number; $left: number }>`
  margin: ${(p) => u(p.$top)} 0 0 ${(p) => u(p.$left)};
  font-size: ${(p) => u(p.$size)};
  line-height: 1;
  font-weight: 400;
  letter-spacing: 0.0025em;
  white-space: nowrap;
`;
const Icon = styled.svg<{ $w: number; $h: number; $top?: number; $left?: number }>`
  display: block;
  flex: none;
  width: ${(p) => u(p.$w)};
  height: ${(p) => u(p.$h)};
  margin-top: ${(p) => u(p.$top ?? 0)};
  margin-left: ${(p) => u(p.$left ?? 0)};
  overflow: visible;
`;
const Fleet = styled.div`
  display: flex;
  gap: ${u(93)};
  padding-top: ${u(81)};
`;
const MapPane = styled.main`
  margin: 0 ${u(7)} 0 ${u(8)};
  border: 1px solid #5c5c5c;
  border-bottom: 2px solid #333;
  overflow: hidden;
`;
const MapSvg = styled.svg`
  display: block;
  width: 100%;
  height: 100%;
  background: #ebf0f3;
`;
const RoadLabel = styled.text`
  font-family: Roboto, "Liberation Sans", sans-serif;
  font-weight: 500;
  stroke: #f4f7f8;
  stroke-width: 6px;
  stroke-linejoin: round;
  paint-order: stroke;
`;
const BusLabel = styled.text`
  font-family: "Liberation Sans", Arial, sans-serif;
  font-weight: 700;
  font-size: 54px;
  fill: #000;
  stroke: #fff;
  stroke-opacity: 0.7;
  stroke-width: 6px;
  paint-order: stroke;
`;
const Credit = styled.text`
  font-family: Roboto, "Liberation Sans", sans-serif;
  font-size: 33px;
  fill: #444;
`;
const Stats = styled.section`
  background: #ebf3eb;
  display: flex;
  align-items: flex-start;
  padding: 0 ${u(22)} 0 ${u(28)};
`;
const Arrivals = styled.div`
  display: flex;
  align-items: flex-start;
  margin-left: auto;
`;
const Lines = styled.div<{ $size: number; $line: number; $top: number; $w: number; $right?: boolean }>`
  margin-top: ${(p) => u(p.$top)};
  width: ${(p) => u(p.$w)};
  font-size: ${(p) => u(p.$size)};
  line-height: ${(p) => u(p.$line)};
  text-align: ${(p) => (p.$right ? "right" : "left")};
  white-space: nowrap;
`;
const BusPair = styled.div`
  display: grid;
  gap: ${u(30.5)};
  margin: ${u(80)} 0 0 ${u(63)};
`;
const Screen = styled.section`
  margin: 0 ${u(7)} 0 ${u(8)};
  border: 1px solid #777;
  border-top: 2px solid #333;
  border-bottom: 2px solid #333;
  background: #fff;
  display: flex;
  flex-direction: column;
  align-items: center;
  padding-top: ${u(285)};
`;
const LogoWord = styled.text`
  font-family: Inter, Roboto, sans-serif;
  font-weight: 600;
`;
const LogoSub = styled.text`
  font-family: "Liberation Sans", Arial, sans-serif;
  font-size: 37.5px;
  fill: #4f86f0;
`;
const Search = styled.input`
  width: ${u(1323)};
  height: ${u(68)};
  margin: ${u(69)} 0 0 ${u(11)};
  padding: 0;
  outline: none;
  background: #fff;
  border: 2px solid #d9d9d9;
  border-top: 3px solid #c0c0c0;
`;
const Buttons = styled.div`
  display: flex;
  gap: ${u(42)};
  margin: ${u(23)} 0 0 ${u(4)};
`;
const Button = styled.button<{ $w: number }>`
  width: ${(p) => u(p.$w)};
  height: ${u(68)};
  padding: 0;
  border: 2px solid #dcdcdc;
  border-radius: 3px;
  background: linear-gradient(#f5f5f5, #f1f1f1);
  color: #444;
  font: 700 ${u(25.8)} "Liberation Sans", Arial, sans-serif;
  white-space: nowrap;
`;
const Dock = styled.footer`
  background: #ebf3eb;
  display: flex;
  align-items: flex-start;
`;
const DockTab = styled.div`
  display: flex;
  flex-direction: column;
  gap: ${u(7)};
  margin: ${u(34)} 0 0 ${u(459)};
`;
const Underline = styled.div`
  height: ${u(8)};
  width: ${u(168)};
  background: #707070;
`;
const Brand = styled.text`
  font-family: Roboto, "Liberation Sans", sans-serif;
  font-weight: 700;
  font-size: 146px;
`;

/* ---------- drawings ---------- */

const PIN = "M59.5 0C26 0 0 26 0 59.5C0 95 40 135 59.5 164C79 135 119 95 119 59.5C119 26 93 0 59.5 0ZM59.5 29A30.5 30.5 0 1 1 59.5 90A30.5 30.5 0 1 1 59.5 29Z";
const Pin = ({ color }: { color: string }) => (
  <Icon $w={119} $h={164} viewBox="0 0 119 164">
    <path d={PIN} fill={color} fillRule="evenodd" />
  </Icon>
);

const Bus = ({ color, w }: { color: string; w: number }) => (
  <Icon $w={w} $h={(w * 203) / 365} viewBox="0 0 365 203">
    <path
      fill={color}
      fillRule="evenodd"
      d="M16 0H322Q344 2 350 28L365 108V168Q365 183 347 183H331A41 41 0 1 0 249 183H100A41 41 0 1 0 18 183Q0 180 0 165V16Q0 0 16 0ZM17 17V83H84V17ZM100 17V83H167V17ZM182 17V83H249V17ZM266 17V83L291 108H347L336 36Q332 17 318 17Z"
    />
    <circle cx="59" cy="174" r="29" fill={color} />
    <circle cx="290" cy="174" r="29" fill={color} />
  </Icon>
);

const Info = () => (
  <Icon $w={117} $h={117} $top={45} $left={7} viewBox="880 262 117 117">
    <circle cx="938.5" cy="320.5" r="58.5" fill="#f0975a" />
    <rect x="927" y="274" width="22" height="18" rx="4" fill="#fff" />
    <path d="M924 300H946Q949 300 949 303V342H955Q958 342 958 345V355Q958 358 955 358H923Q920 358 920 355V345Q920 342 923 342H928V317H923Q920 317 920 314V303Q920 300 924 300Z" fill="#fff" />
  </Icon>
);

const House = () => (
  <Icon $w={135} $h={146} $top={18} $left={49} viewBox="1045 235 135 146">
    <path d="M1112.5 235L1180 289V294H1173V381H1131V343H1098V381H1054V294H1045V289Z" fill="#01713e" />
  </Icon>
);

const Chart = () => (
  <Icon $w={164} $h={166} $top={37} viewBox="33 2652 164 166">
    <path d="M33 2652H48V2803H197V2818H33ZM61 2703H88V2789H61ZM98 2652H125V2789H98ZM134 2703H161V2789H134ZM171 2744H197V2789H171Z" fill="#385723" />
  </Icon>
);

const Stopwatch = () => (
  <Icon $w={161} $h={183} $top={67} $left={42} viewBox="2817 2682 161 183">
    <circle cx="2897.5" cy="2785" r="72.5" fill="none" stroke="#000" strokeWidth="15" />
    <path d="M2869 2682H2926V2696H2905V2710H2890V2696H2869Z" />
    <path d="M2948 2716L2957 2724" stroke="#000" strokeWidth="13" strokeLinecap="round" />
    <path d="M2897.5 2750V2784L2918 2807" fill="none" stroke="#000" strokeWidth="7.5" strokeLinejoin="round" />
    <circle cx="2897.5" cy="2738" r="5" />
    <circle cx="2897.5" cy="2832" r="5" />
    <circle cx="2851" cy="2783" r="5" />
    <circle cx="2945" cy="2783" r="5" />
  </Icon>
);

const Headphones = () => (
  <Icon $w={186} $h={167} $top={29} $left={192} viewBox="197 4303 186 167">
    <path d="M205 4440V4395.5A85 85 0 0 1 375 4395.5V4440" fill="none" stroke="#385723" strokeWidth="15.5" strokeLinecap="round" />
    <rect x="222" y="4396" width="35" height="74" rx="10" fill="#385723" />
    <rect x="325" y="4396" width="35" height="74" rx="10" fill="#385723" />
    <path d="M205 4428H230V4438H205ZM350 4428H375V4438H350Z" fill="#385723" />
  </Icon>
);

const Gamepad = () => (
  <Icon $w={207} $h={139} $top={54} $left={528} viewBox="910 4329 207 139">
    <path
      d="M958 4330C970 4328 978 4345 1000 4345H1024C1046 4345 1054 4328 1066 4330C1086 4333 1100 4348 1104 4364C1111 4390 1116 4415 1116 4440C1116 4458 1108 4468 1099 4467C1082 4466 1076 4432 1032 4432H992C948 4432 942 4466 925 4467C916 4468 911 4458 911 4440C911 4415 916 4390 922 4364C926 4348 940 4333 958 4330Z"
      fill="#a5a5a5"
      stroke="#000"
      strokeWidth="2.5"
    />
    <path d="M961 4368H973V4383H987V4394H973V4408H961V4394H947V4383H961Z" fill="#ebf3eb" stroke="#000" strokeWidth="2.5" strokeLinejoin="round" />
    {[[1060, 4374], [1060, 4403], [1045, 4389], [1075, 4389]].map(([x, y]) => (
      <circle key={`${x}-${y}`} cx={x} cy={y} r="7.5" fill="#ebf3eb" stroke="#000" strokeWidth="2.5" />
    ))}
  </Icon>
);

const YouTube = () => (
  <Icon $w={475} $h={159} $top={38} $left={516} viewBox="1633 4313 475 159">
    <path d="M1860 4315Q1967 4311 2074 4315Q2102 4316 2105 4350Q2111 4392 2105 4436Q2102 4469 2074 4470Q1967 4474 1860 4470Q1832 4469 1829 4436Q1823 4392 1829 4350Q1832 4316 1860 4315Z" fill="#f00" />
    <Brand x="1631" y="4438" textLength="186" lengthAdjust="spacingAndGlyphs" fill="#000">You</Brand>
    <Brand x="1847" y="4440" textLength="240" lengthAdjust="spacingAndGlyphs" fill="#ebf3eb">Tube</Brand>
  </Icon>
);

const GoogleMark = () => (
  <Icon $w={168} $h={169} viewBox="4 4 40 40" preserveAspectRatio="none">
    <path fill="#4285f4" d="M43.6 20.1H24v8h11.3c-.8 2.2-2.2 4.2-4.1 5.6l6.2 5.2C37 39.2 44 34 44 24c0-1.3-.1-2.6-.4-3.9z" />
    <path fill="#ea4335" d="M6.3 14.7l6.6 4.8C14.7 15.1 19 12 24 12c3.1 0 5.8 1.2 8 3l5.7-5.7C34 6.1 29.3 4 24 4 16.3 4 9.7 8.3 6.3 14.7z" />
    <path fill="#34a853" d="M24 44c5.2 0 9.9-2 13.4-5.2l-6.2-5.2A12 12 0 0 1 24 36c-5.2 0-9.6-3.3-11.3-7.9l-6.5 5C9.5 39.6 16.2 44 24 44z" />
    <path fill="#fbbc05" d="M6.3 14.7C4.8 17.5 4 20.6 4 24c0 3.3.8 6.400 2.200 9.100l6.500-5A12 12 0 0 1 12.900 19.500z" />
  </Icon>
);

/* letter, colour, x, advance, size, tilt */
const LETTERS: [string, string, number, number, number, number][] = [
  ["G", "#4285f4", 1179, 176, 216, 0],
  ["o", "#ea4335", 1346, 118, 181, 0],
  ["o", "#fbbc05", 1458, 118, 181, 0],
  ["g", "#4285f4", 1571, 120, 181, 0],
  ["l", "#34a853", 1675, 52, 201, 0],
  ["e", "#ea4335", 1713, 112, 181, -20],
];
const GoogleLogo = () => (
  <Icon $w={645} $h={230} viewBox="1180 3170 645 230">
    {LETTERS.map(([c, fill, x, adv, size, tilt], i) => (
      <LogoWord
        key={i}
        fill={fill}
        fontSize={size}
        x={x}
        y={3340}
        textLength={adv}
        lengthAdjust="spacingAndGlyphs"
        transform={tilt ? `rotate(${tilt} ${x + adv / 2} 3291)` : undefined}
      >
        {c}
      </LogoWord>
    ))}
    <LogoSub x="1689" y="3388" textLength="113">Videos</LogoSub>
  </Icon>
);

const bend = (p: Pt[]) => {
  const [a, m, b] = p;
  const c: Pt = [2 * m[0] - (a[0] + b[0]) / 2, 2 * m[1] - (a[1] + b[1]) / 2];
  let len = 0;
  let prev = a;
  for (let i = 1; i <= 20; i++) {
    const t = i / 20;
    const q: Pt = [0, 1].map((k) => (1 - t) ** 2 * a[k] + 2 * t * (1 - t) * c[k] + t * t * b[k]) as Pt;
    len += Math.hypot(q[0] - prev[0], q[1] - prev[1]);
    prev = q;
  }
  return { d: `M${a.join(" ")}Q${c.join(" ")} ${b.join(" ")}`, len };
};

const MapText = ({ label, id }: { label: Label; id: string }) => {
  const p = pts(label.p);
  const fill = label.ink ?? "#7e8589";
  const size = label.size ?? 32.5;
  if (p.length === 2) {
    const dx = p[1][0] - p[0][0];
    const dy = p[1][1] - p[0][1];
    return (
      <RoadLabel
        fontSize={size}
        fill={fill}
        textLength={Math.hypot(dx, dy).toFixed(1)}
        lengthAdjust="spacingAndGlyphs"
        transform={`translate(${p[0].join(" ")}) rotate(${((Math.atan2(dy, dx) * 180) / Math.PI).toFixed(2)})`}
      >
        {label.t}
      </RoadLabel>
    );
  }
  const { d, len } = bend(p);
  return (
    <>
      <path id={id} d={d} fill="none" />
      <RoadLabel fontSize={size} fill={fill}>
        <textPath href={`#${id}`} textLength={(len - 2).toFixed(1)}>{label.t}</textPath>
      </RoadLabel>
    </>
  );
};

const Shapes = ({ list, fill, stroke }: { list: string[]; fill: string; stroke?: string }) => (
  <g fill={fill} stroke={stroke} strokeWidth={stroke ? 3 : undefined} strokeLinejoin="miter">
    {list.map((s, i) => <polygon key={i} points={join(s)} />)}
  </g>
);
const Strokes = ({ list, color, w, opacity, dash }: { list: string[]; color: string; w: number; opacity?: number; dash?: string }) => (
  <g fill="none" stroke={color} strokeWidth={w} strokeLinejoin="round" strokeLinecap="round" strokeOpacity={opacity} strokeDasharray={dash}>
    {list.map((s, i) => <polyline key={i} points={join(s)} />)}
  </g>
);

const CampusMap = () => (
  <MapSvg viewBox="13 433.5 2980 2180" preserveAspectRatio="none">
    <Shapes list={OUTSIDE} fill="#f1f1f1" />
    <Shapes list={PARKS} fill="#c8efba" />
    <Shapes list={INFIELD} fill="#ebf0f3" />
    <Strokes list={PATHS} color="#fdfefe" w={4} />
    <Strokes list={DASHES} color="#fdfefe" w={4} dash="11 8" />
    <Shapes list={LAKES} fill="#a9daff" />
    <Strokes list={[RIVER]} color="#a9daff" w={7} />
    {ROADS.map(([w, p], i) => <Strokes key={i} list={[p]} color="#fff" w={+w} />)}
    <circle cx="179" cy="502" r="31" fill="none" stroke="#fff" strokeWidth="22" />
    <circle cx="1717" cy="2236" r="28" fill="#ebf0f3" stroke="#fff" strokeWidth="17" />
    <Shapes list={HIGHWAY} fill="#ffdb4b" />
    {MEDIANS.map(([w, p], i) => <Strokes key={i} list={[p]} color="#fffbe6" w={+w} />)}
    <Strokes list={["F 1452,450 1462,470 1500,525 1568,605"]} color="#ffdb4b" w={24} />
    <Shapes list={RED} fill="#e15c63" stroke="#84797b" />
    <polygon points={join("F 258,741 293,741 293,777 258,777")} fill="#ebf0f3" stroke="#84797b" strokeWidth="3" />
    <Shapes list={BLUE} fill="#6689c1" stroke="#566272" />
    <Shapes list={AMBER} fill="#e8b161" stroke="#8d8676" />
    <Strokes list={WALLS} color="#6d6f74" w={4} />
    {ARROWS.map(([x, y, r, c], i) => (
      <path key={i} d="M0 -15L9 -2H3V15H-3V-2H-9Z" fill={c} transform={`translate(${x} ${y}) rotate(${r})`} />
    ))}
    {LABELS.map((l, i) => <MapText key={i} label={l} id={`road-${i}`} />)}
    {GREY_ROUTE.map((s, i) => <Strokes key={i} list={[s]} color="#a8a8a8" w={14} opacity={0.55} />)}
    {GREEN_ROUTE.map(([w, p], i) => <Strokes key={i} list={[p]} color="#6aa800" w={+w} opacity={0.6} />)}
    {AMBER_ROUTE.map(([w, p], i) => <Strokes key={i} list={[p]} color="#ffa500" w={+w} opacity={0.6} />)}

    <rect x="2386" y="2058" width="53" height="42" rx="21" fill="#fff" stroke="#666" strokeWidth="3.5" />
    <Credit x="2412.5" y="2090" textAnchor="middle">49</Credit>

    <BusLabel x="2242" y="674" textLength="248">Bus 2404</BusLabel>
    <polygon points={join("C 540,377 617,454 491,459 537,423")} fill="#a5a5a5" stroke="#555" strokeWidth="4" />
    <BusLabel x="714" y="2111" textLength="250">Bus 2402</BusLabel>
    <polygon points={join("D 1232,893 1268,929 1320,924 1233,997")} fill="#66a453" stroke="#555" strokeWidth="4" />

    <path d={PIN} fill="#942d8f" fillRule="evenodd" transform="translate(1215 1070)" />
    <path d={PIN} fill="#6d563c" fillRule="evenodd" transform="translate(2243 1649)" />

    <rect x="2567" y="2149" width="370" height="423" rx="76" fill="rgb(140,155,135)" fillOpacity="0.4" />
    {[{ o: 6, f: "#8a8482", s: "none" }, { o: 0, f: "#989391", s: "#000" }].map(({ o, f, s }) => (
      <polygon
        key={o}
        transform={`translate(${o} ${o})`}
        points={join(
          "F 1246,1105 1249,1097 1256,1094 1267,1094 1274,1097 1277,1105 1277,1262 1393,1262 1442,1309 1393,1357 1277,1357 1277,1470 1246,1470 1246,1244 1132,1244 1081,1196 1132,1149 1246,1149"
        )}
        fill={f}
        stroke={s}
        strokeWidth="3"
      />
    ))}
    <rect x="2603" y="2572" width="390" height="45" fill="#f5f5f5" fillOpacity="0.7" />
    <Credit x="2619" y="2606" textLength="356">Map data ©2018 Google</Credit>
  </MapSvg>
);

export default function App() {
  return (
    <>
      <Global />
      <Frame>
        <Header>
          <Stops>
            <StopRow>
              <Pin color="#942d8f" />
              <Heading $size={180} $top={4.6} $left={57}>Student Union East</Heading>
            </StopRow>
            <StopRow $indent={6}>
              <Pin color="#6d563c" />
              <Heading as="h2" $size={120} $top={43.4} $left={49.5}>East Deck 2</Heading>
              <Info />
              <House />
            </StopRow>
          </Stops>
          <Fleet>
            <Bus color="#70ad47" w={365} />
            <Bus color="#a5a5a5" w={365} />
          </Fleet>
        </Header>
        <MapPane>
          <CampusMap />
        </MapPane>
        <Stats>
          <Chart />
          <Heading as="h2" $size={180} $top={42.6} $left={41}>Bus Stats</Heading>
          <Arrivals>
            <Lines $size={80} $line={95} $top={62.8} $w={325}>Next Bus<br />arrives in</Lines>
            <BusPair>
              <Bus color="#70ad47" w={125} />
              <Bus color="#a5a5a5" w={125} />
            </BusPair>
            <Lines $size={92.5} $line={104} $top={54} $w={393} $right>2 mins<br />15 mins</Lines>
            <Stopwatch />
          </Arrivals>
        </Stats>
        <Screen>
          <GoogleLogo />
          <Search aria-label="Search" />
          <Buttons>
            <Button $w={224}>Google Search</Button>
            <Button $w={258}>I'm Feeling Lucky</Button>
          </Buttons>
        </Screen>
        <Dock>
          <Headphones />
          <Gamepad />
          <YouTube />
          <DockTab>
            <GoogleMark />
            <Underline />
          </DockTab>
        </Dock>
      </Frame>
    </>
  );
}
